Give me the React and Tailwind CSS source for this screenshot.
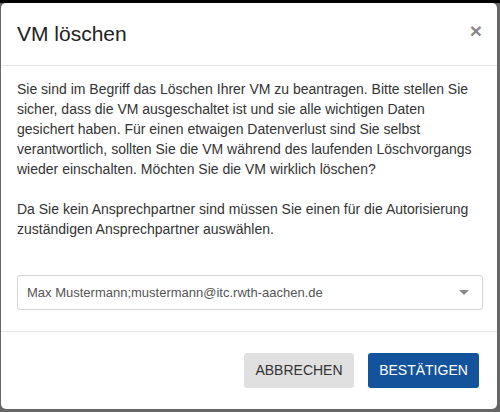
export default function App() {
  return (
    <div className="w-[500px] h-[412px] bg-[#666] overflow-hidden" style={{ fontFamily: '"Liberation Sans", Arial, sans-serif' }}>
      <div className="h-[3px] bg-black" />
      <div className="ml-[1px] w-[496px] h-[406px] bg-white rounded-[5px] flex flex-col">
        <div className="h-[63px] border-b border-[#e5e5e5] flex items-start justify-between pl-4 pr-[15px] pt-[19px]">
          <h4 className="text-[21px] leading-[24px] text-[#222]">VM löschen</h4>
          <span className="text-[21px] leading-[21px] font-bold text-[#888] mt-[-2px]">×</span>
        </div>
        <div className="px-4 pt-[13px] text-[14px] leading-[20px] text-[#333]">
          <p>Sie sind im Begriff das Löschen Ihrer VM zu beantragen. Bitte stellen Sie sicher, dass die VM ausgeschaltet ist und sie alle wichtigen Daten gesichert haben. Für einen etwaigen Datenverlust sind Sie selbst verantwortlich, sollten Sie die VM während des laufenden Löschvorgangs wieder einschalten. Möchten Sie die VM wirklich löschen?</p>
          <p className="mt-[20px]">Da Sie kein Ansprechpartner sind müssen Sie einen für die Autorisierung zuständigen Ansprechpartner auswählen.</p>
          <div className="mt-[36px] mb-[21px] h-[35px] w-[466px] border border-[#d4d4d4] rounded-[3px] flex items-center justify-between pl-[9px] pr-[13px] text-[13px] text-[#555]">
            <span>Max Mustermann;mustermann@itc.rwth-aachen.de</span>
            <svg width="10" height="5" viewBox="0 0 10 5"><path d="M0 0 L10 0 L5 5 Z" fill="#888" /></svg>
          </div>
        </div>
        <div className="border-t border-[#e5e5e5] flex justify-end gap-[14px] pt-[21px] pr-[18px]">
          <button className="w-[110px] h-[35px] rounded-[3px] bg-[#e0e0e0] text-[#333] text-[14px]">ABBRECHEN</button>
          <button className="w-[111px] h-[35px] rounded-[3px] bg-[#13539c] text-white text-[14px]">BESTÄTIGEN</button>
        </div>
      </div>
    </div>
  );
}
